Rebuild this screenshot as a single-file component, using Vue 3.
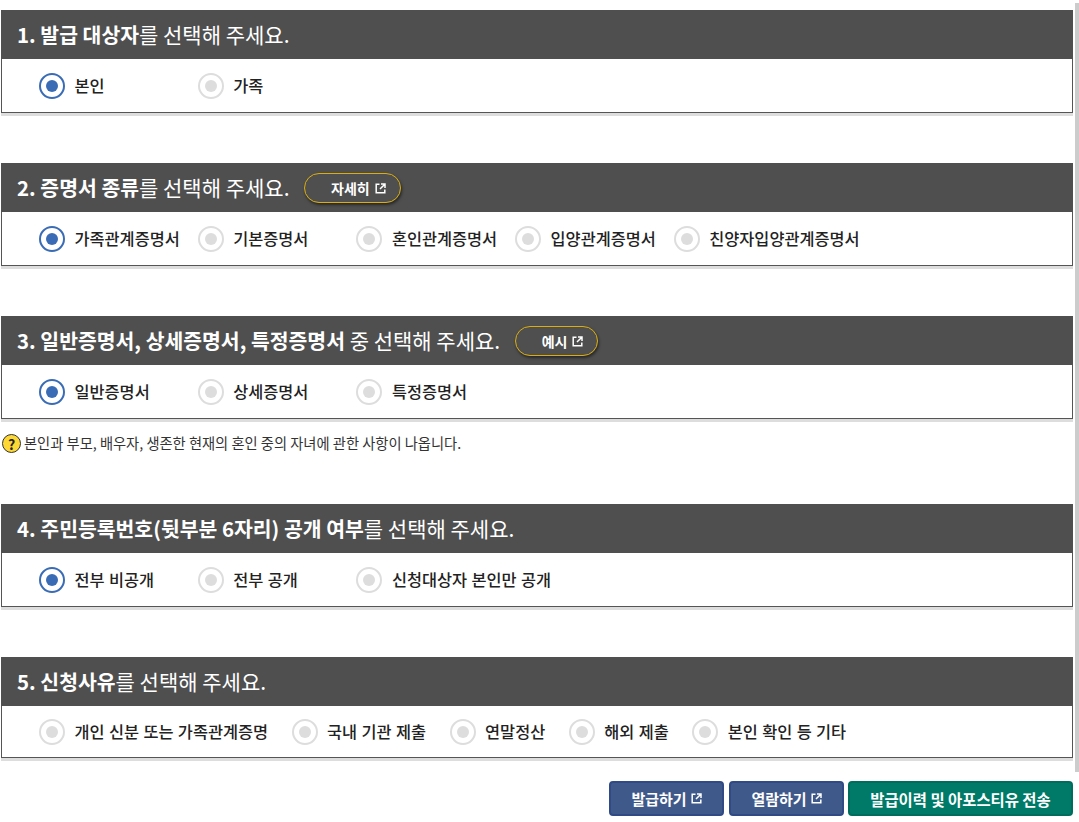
<script setup>
const sections = [
  { num: '1.', bold: '발급 대상자', rest: '를 선택해 주세요.', options: ['본인', '가족'], checked: 0 },
  { num: '2.', bold: '증명서 종류', rest: '를 선택해 주세요.', button: '자세히', options: ['가족관계증명서', '기본증명서', '혼인관계증명서', '입양관계증명서', '친양자입양관계증명서'], checked: 0 },
  { num: '3.', bold: '일반증명서, 상세증명서, 특정증명서', rest: ' 중 선택해 주세요.', button: '예시', options: ['일반증명서', '상세증명서', '특정증명서'], checked: 0, note: '본인과 부모, 배우자, 생존한 현재의 혼인 중의 자녀에 관한 사항이 나옵니다.' },
  { num: '4.', bold: '주민등록번호(뒷부분 6자리) 공개 여부', rest: '를 선택해 주세요.', options: ['전부 비공개', '전부 공개', '신청대상자 본인만 공개'], checked: 0 },
  { num: '5.', bold: '신청사유', rest: '를 선택해 주세요.', options: ['개인 신분 또는 가족관계증명', '국내 기관 제출', '연말정산', '해외 제출', '본인 확인 등 기타'], checked: -1, flow: true },
]
</script>

<template>
  <div class="page">
    <div class="scrollbar"></div>
    <section v-for="s in sections" :key="s.num" class="section">
      <div class="panel">
        <h2 class="head">
          <span class="title"><b>{{ s.num }} {{ s.bold }}</b>{{ s.rest }}</span>
          <a v-if="s.button" class="pill">
            {{ s.button }}
            <svg class="ext" viewBox="0 0 11 11"><path d="M4.5 1.2H1.2v8.6h8.6V6.5M6 1h4v4M9.8 1.2 5 6" fill="none" stroke="currentColor" stroke-width="1.5"/></svg>
          </a>
        </h2>
        <div class="options" :class="{ flow: s.flow }">
          <label v-for="(o, i) in s.options" :key="o" class="option">
            <span class="radio" :class="{ on: i === s.checked }"><i></i></span>
            <span class="label">{{ o }}</span>
          </label>
        </div>
      </div>
      <p v-if="s.note" class="note"><span class="help">?</span>{{ s.note }}</p>
    </section>
    <div class="actions">
      <button class="btn blue">발급하기<svg class="ext" viewBox="0 0 11 11"><path d="M4.5 1.2H1.2v8.6h8.6V6.5M6 1h4v4M9.8 1.2 5 6" fill="none" stroke="currentColor" stroke-width="1.5"/></svg></button>
      <button class="btn blue">열람하기<svg class="ext" viewBox="0 0 11 11"><path d="M4.5 1.2H1.2v8.6h8.6V6.5M6 1h4v4M9.8 1.2 5 6" fill="none" stroke="currentColor" stroke-width="1.5"/></svg></button>
      <button class="btn green">발급이력 및 아포스티유 전송</button>
    </div>
  </div>
</template>

<style scoped>
.page {
  position: relative;
  width: 1079px;
  height: 822px;
  overflow: hidden;
  box-sizing: border-box;
  padding: 10px 6px 0 1px;
  background: #fff;
  font-family: "Noto Sans CJK KR", "Noto Sans", sans-serif;
  color: #222;
}
.scrollbar {
  position: absolute;
  top: 3px;
  right: 0;
  width: 4px;
  height: 769px;
  background: #ccc;
}
.section { margin-bottom: 50px; }
.panel {
  border: 1px solid #555;
  border-top: 0;
  box-shadow: 0 3px 0 #ddd;
  background: #fff;
}
.head {
  display: flex;
  align-items: center;
  height: 49px;
  margin: 0 -1px;
  padding: 0 0 0 16px;
  background: #4f4f4f;
  color: #fff;
  font-size: 21px;
  font-weight: 400;
  line-height: 1;
}
.title b { font-size: 20.45px; font-weight: 700; }
.pill {
  display: flex;
  align-items: center;
  gap: 5px;
  height: 30px;
  margin: 1px 0 0 14.5px;
  padding: 0 14px 0 26px;
  box-sizing: border-box;
  border: 1.5px solid #dcae0c;
  border-radius: 15px;
  box-shadow: 1px 2px 3px rgba(0, 0, 0, 0.5);
  font-size: 14px;
  font-weight: 700;
}
.options {
  display: flex;
  align-items: center;
  height: 53px;
  padding-left: 37px;
}
.options.flow { gap: 23.5px; height: 51px; }
.option {
  display: flex;
  flex: none;
  align-items: center;
  gap: 9.5px;
  width: 158.7px;
  white-space: nowrap;
}
.flow .option { width: auto; }
.radio {
  display: flex;
  flex: none;
  align-items: center;
  justify-content: center;
  width: 26px;
  height: 26px;
  box-sizing: border-box;
  border: 2px solid #ddd;
  border-radius: 50%;
  background: #fff;
}
.radio i {
  width: 12px;
  height: 12px;
  border-radius: 50%;
  background: #ddd;
}
.radio.on { border-color: #3a6cb5; }
.radio.on i { background: #3a6cb5; }
.label {
  padding-bottom: 1px;
  font-size: 16.35px;
  font-weight: 500;
  line-height: 1;
  word-spacing: 0.7px;
  color: #222;
}
.note {
  display: flex;
  align-items: center;
  gap: 3px;
  height: 21px;
  margin: 14px 0 0 1px;
  font-size: 14.25px;
  line-height: 1;
  color: #333;
}
.help {
  display: flex;
  flex: none;
  align-items: center;
  justify-content: center;
  width: 19px;
  height: 19px;
  box-sizing: border-box;
  border: 1.5px solid #333;
  border-radius: 50%;
  background: #fdd835;
  color: #222;
  font-size: 14px;
  font-weight: 700;
}
.actions {
  display: flex;
  justify-content: flex-end;
  margin-top: -27px;
}
.btn {
  display: flex;
  align-items: center;
  justify-content: center;
  gap: 4px;
  height: 35px;
  padding: 0;
  border: 2px solid #2f4a85;
  border-radius: 4px;
  color: #fff;
  font-family: inherit;
  font-size: 15px;
  font-weight: 700;
}
.blue { width: 115px; margin-right: 5px; background: #3f5a8a; }
.blue + .green { margin-left: -1px; }
.green { width: 225px; background: #007a68; border-color: #006d5c; font-size: 15.4px; }
.ext {
  display: block;
  width: 11px;
  height: 11px;
  flex: none;
}
</style>
